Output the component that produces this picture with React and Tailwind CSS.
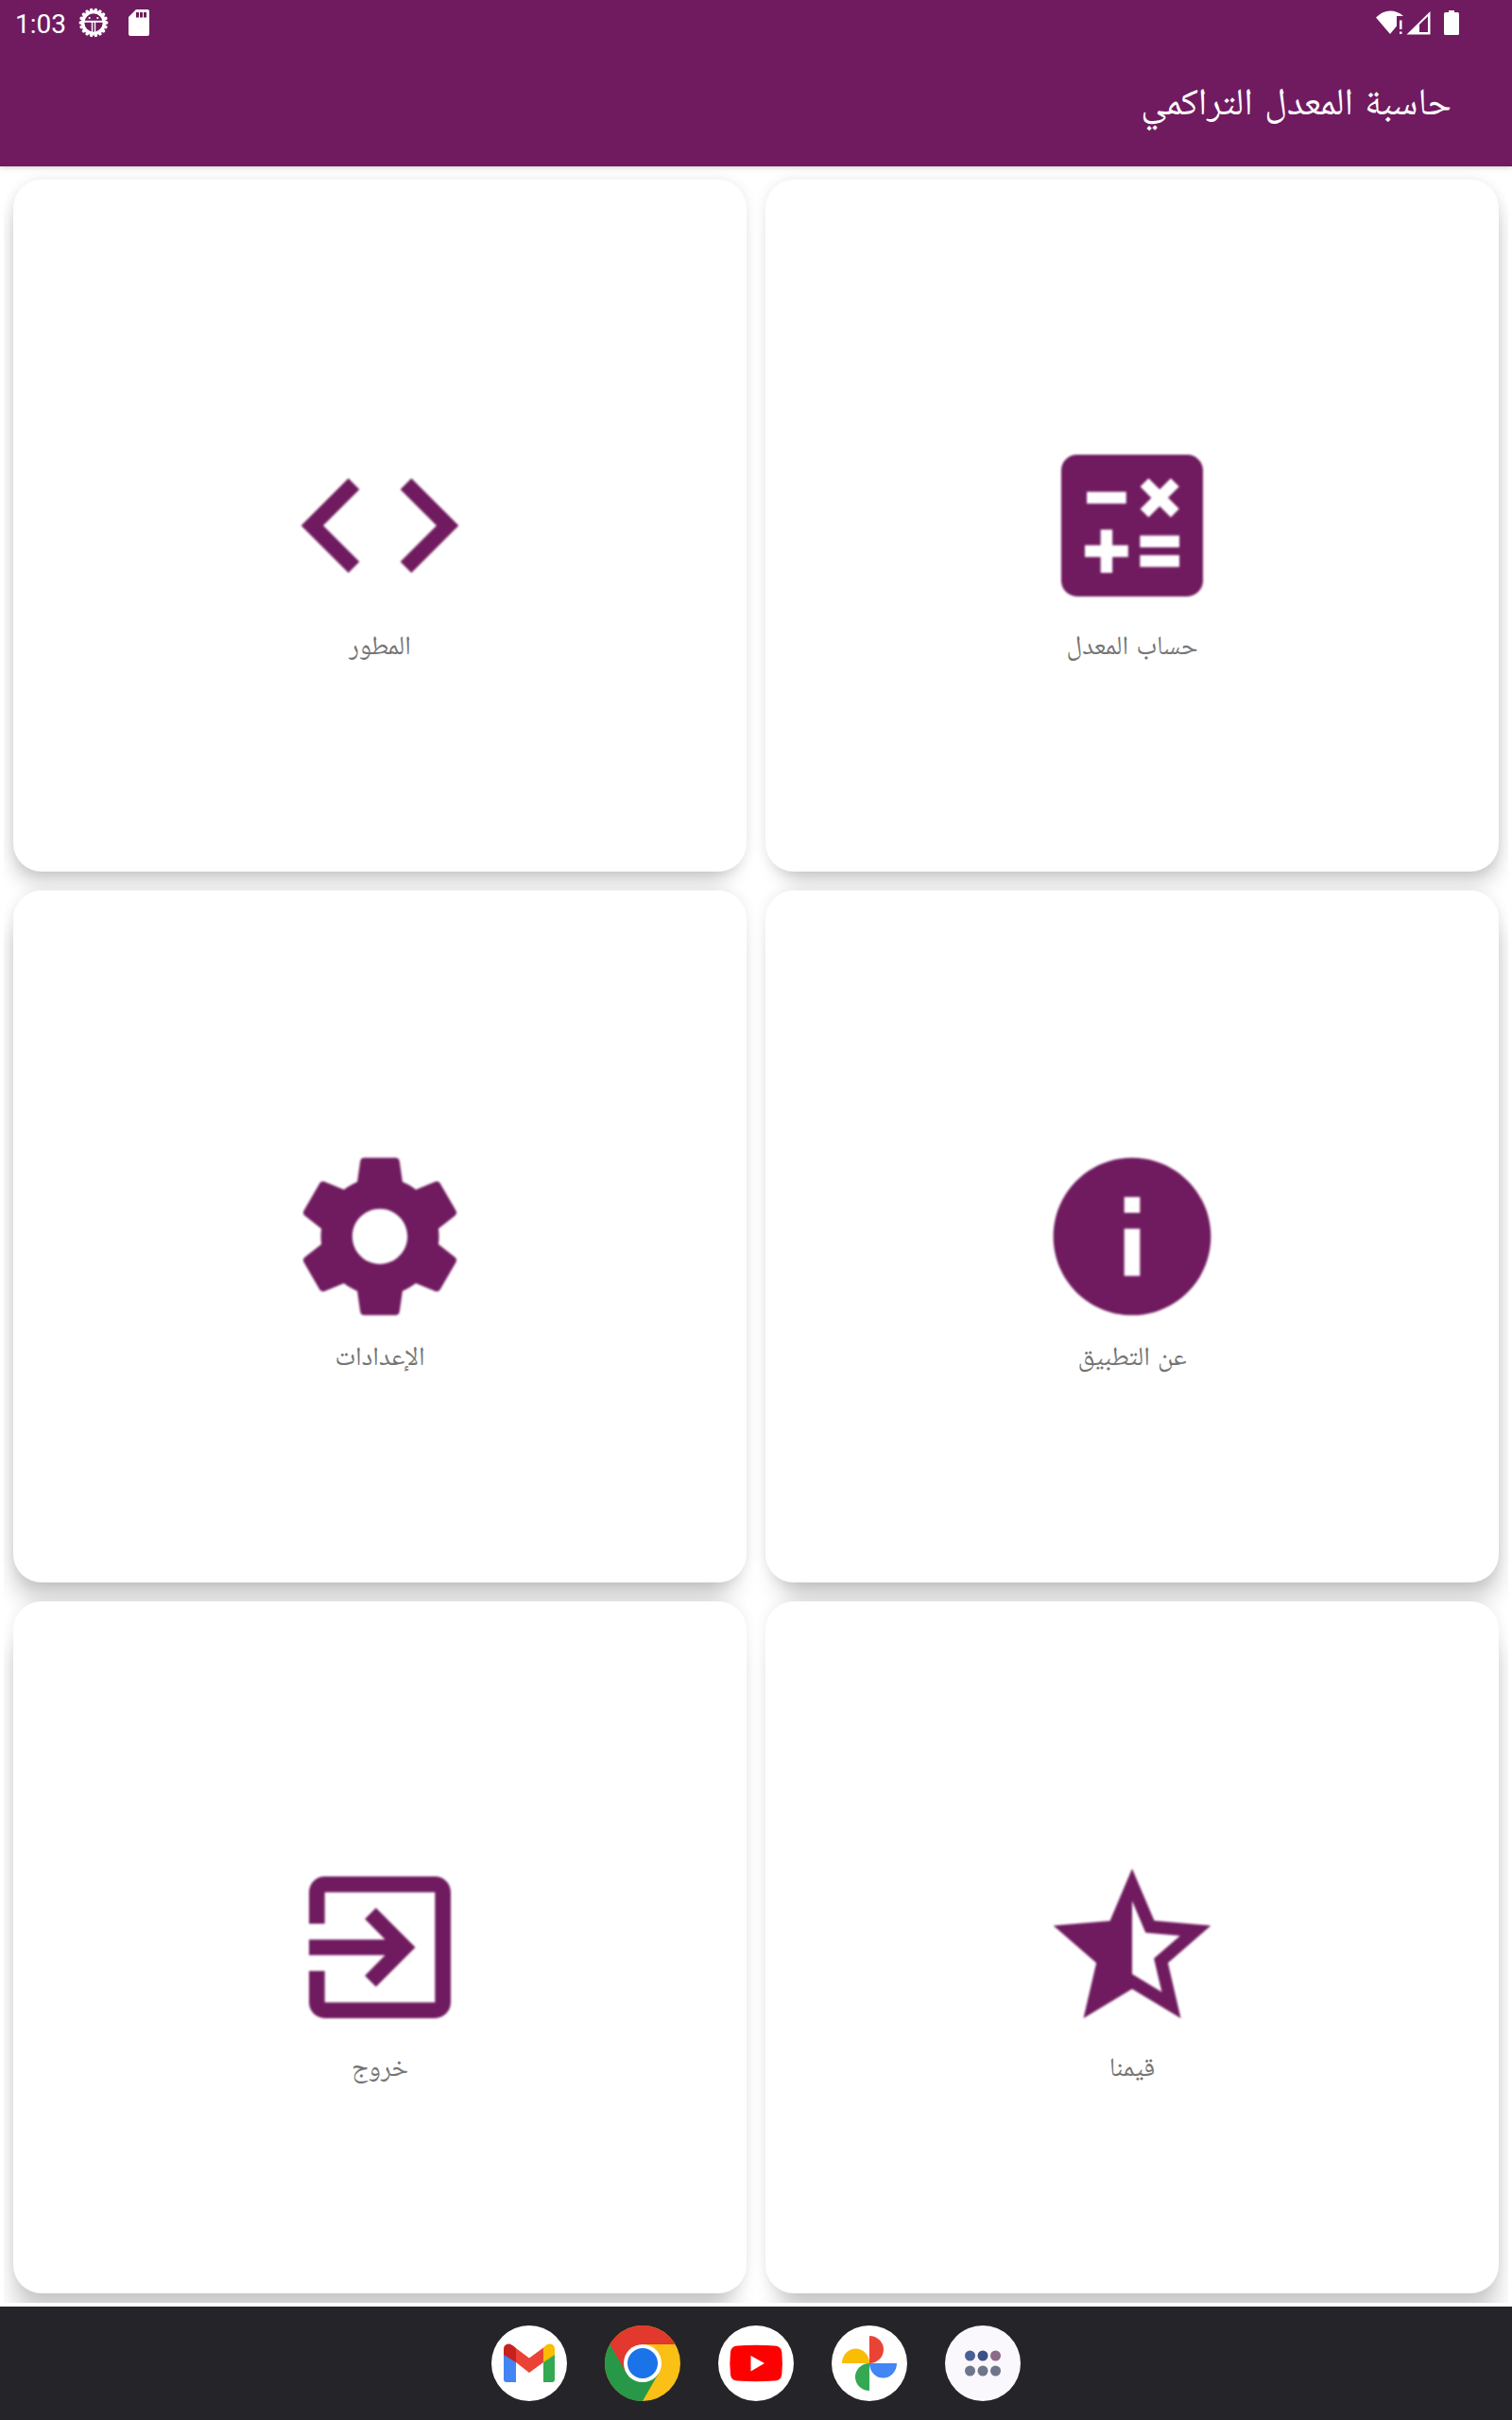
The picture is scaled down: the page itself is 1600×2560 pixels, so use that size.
const icons = {
  calc: 'M19 3H5c-1.1 0-2 .9-2 2v14c0 1.1.9 2 2 2h14c1.1 0 2-.9 2-2V5c0-1.1-.9-2-2-2zm-5.97 4.06L14.09 6l1.41 1.41L16.91 6l1.06 1.06-1.41 1.41 1.41 1.41-1.06 1.06-1.41-1.4-1.41 1.41-1.06-1.06 1.41-1.41-1.41-1.42zM6.25 7.72h5v1.5h-5v-1.5zM11.5 16h-2v2H8v-2H6v-1.5h2v-2h1.5v2h2V16zm6.5 1.25h-5v-1.5h5v1.5zm0-2.5h-5v-1.5h5v1.5z',
  code: 'M9.4 16.6L4.8 12l4.6-4.6L8 6l-6 6 6 6 1.4-1.4zm5.2 0l4.6-4.6-4.6-4.6L16 6l6 6-6 6-1.4-1.4z',
  info: 'M12 2C6.48 2 2 6.48 2 12s4.48 10 10 10 10-4.48 10-10S17.52 2 12 2zm1 15h-2v-6h2v6zm0-8h-2V7h2v2z',
  settings: 'M19.43 12.98c.04-.32.07-.64.07-.98s-.03-.66-.07-.98l2.11-1.65c.19-.15.24-.42.12-.64l-2-3.46c-.12-.22-.39-.3-.61-.22l-2.49 1c-.52-.4-1.08-.73-1.69-.98l-.38-2.65C14.46 2.18 14.25 2 14 2h-4c-.25 0-.46.18-.49.42l-.38 2.65c-.61.25-1.17.59-1.69.98l-2.49-1c-.23-.09-.49 0-.61.22l-2 3.46c-.13.22-.07.49.12.64l2.11 1.65c-.04.32-.07.65-.07.98s.03.66.07.98l-2.11 1.65c-.19.15-.24.42-.12.64l2 3.46c.12.22.39.3.61.22l2.49-1c.52.4 1.08.73 1.69.98l.38 2.65c.03.24.24.42.49.42h4c.25 0 .46-.18.49-.42l.38-2.65c.61-.25 1.17-.59 1.69-.98l2.49 1c.23.09.49 0 .61-.22l2-3.46c.12-.22.07-.49-.12-.64l-2.11-1.65zM12 15.5c-1.93 0-3.5-1.57-3.5-3.5s1.57-3.5 3.5-3.5 3.5 1.57 3.5 3.5-1.57 3.5-3.5 3.5z',
  star: 'M22 9.24l-7.19-.62L12 2 9.19 8.63 2 9.24l5.46 4.73L5.82 21 12 17.27 18.18 21l-1.63-7.03L22 9.24zM12 15.4V6.1l1.71 4.04 4.38.38-3.32 2.88 1 4.28L12 15.4z',
  exit: 'M10.09 15.59L11.5 17l5-5-5-5-1.41 1.41L12.67 11H3v2h9.67l-2.58 2.59zM19 3H5c-1.11 0-2 .9-2 2v4h2V5h14v14H5v-4H3v4c0 1.1.89 2 2 2h14c1.1 0 2-.9 2-2V5c0-1.1-.9-2-2-2z',
};

const cards = [
  { label: 'حساب المعدل', icon: 'calc', shadow: 'shadow-[6px_18px_22px_-8px_rgba(0,0,0,0.2),0_0_14px_rgba(0,0,0,0.09)]' },
  { label: 'المطور', icon: 'code', shadow: 'shadow-[-6px_18px_22px_-8px_rgba(0,0,0,0.2),0_0_14px_rgba(0,0,0,0.09)]' },
  { label: 'عن التطبيق', icon: 'info', shadow: 'shadow-[6px_24px_24px_-8px_rgba(0,0,0,0.21),0_0_14px_rgba(0,0,0,0.09)]' },
  { label: 'الإعدادات', icon: 'settings', shadow: 'shadow-[-6px_24px_24px_-8px_rgba(0,0,0,0.21),0_0_14px_rgba(0,0,0,0.09)]' },
  { label: 'قيمنا', icon: 'star', shadow: 'shadow-[6px_32px_24px_-8px_rgba(0,0,0,0.19),0_0_14px_rgba(0,0,0,0.08)]' },
  { label: 'خروج', icon: 'exit', shadow: 'shadow-[-6px_32px_24px_-8px_rgba(0,0,0,0.19),0_0_14px_rgba(0,0,0,0.08)]' },
];

function Card({ label, icon, shadow }) {
  return (
    <div className={'flex h-[732px] flex-col items-center rounded-[30px] bg-white pt-[266px] ' + shadow}>
      <svg viewBox="0 0 24 24" className="size-[200px] shrink-0 fill-[#701b5f] blur-[1px]">
        <path d={icons[icon]} />
      </svg>
      <span className="mt-[11px] text-[28px] leading-[38px] [word-spacing:2px] whitespace-nowrap text-[#757575]">{label}</span>
    </div>
  );
}

function StatusBar() {
  const teeth = Array.from({ length: 18 }, (_, i) => i * 20);
  return (
    <div dir="ltr" className="flex h-12 items-center justify-between pr-[56px] pl-4">
      <div className="flex items-center">
        <span className="w-[54px] pt-1 font-[Roboto] text-[28px] leading-8">1:03</span>
        <svg viewBox="-16 -16 32 32" className="ml-[13px] size-8">
          <circle r="11" fill="none" stroke="white" strokeWidth="2.7" />
          {teeth.map((a) => (
            <path key={a} d="M-2.6-11.5L-1.2-15.3H1.2L2.6-11.5z" fill="white" transform={'rotate(' + (a + 10) + ')'} />
          ))}
          <path d="M-11-1.2H11" stroke="white" strokeWidth="2" />
          <path d="M-1.5-1V11M1.5-1V11" stroke="white" strokeWidth="1.4" />
          <circle cx="-4.3" cy="-5" r="1.1" fill="white" />
          <circle cx="4.3" cy="-5" r="1.1" fill="white" />
        </svg>
        <svg viewBox="0 0 22 28" className="ml-[21px] h-7 w-[22px]">
          <path fillRule="evenodd" fill="white" d="M8 0H20Q22 0 22 2V26Q22 28 20 28H2Q0 28 0 26V8zM8 3V8.600H11V3zM12 3V8.600H15V3zM16 3V8.600H19V3z" />
        </svg>
      </div>
      <svg viewBox="0 0 88 26" className="h-[26px] w-[88px]" fill="white">
        <path d="M0 7.500Q7 .5 15 .5T29 6H22V16.500L15 25z" />
        <path d="M25 10.500h2.500v9.500h-2.500zM25 22.500h2.500v2.500h-2.500z" />
        <path fillRule="evenodd" d="M32.500 25.500L57.500 1V25.500zM46 15V23H55V6.300z" />
        <path d="M77 0h6v2h3.500Q88 2 88 4V24.500Q88 26 86.500 26H73.500Q72 26 72 24.500V4Q72 2 73.500 2H77z" />
      </svg>
    </div>
  );
}

function Gmail() {
  return (
    <svg viewBox="0 0 80 80" className="size-20">
      <circle cx="40" cy="40" r="40" fill="white" />
      <path d="M13 29v28q0 3 3 3h10V35z" fill="#4285f4" />
      <path d="M67 29v28q0 3-3 3H55V35z" fill="#34a853" />
      <path d="M26 24L40 34.500 55 23.500V39L40 50 26 39z" fill="#ea4335" />
      <path d="M13 31v-6q0-5 5-5.500 3-.3 8 4.500v15z" fill="#c5221f" />
      <path d="M67 31v-6q0-5-5-5.500-3-.3-7 4v15.500z" fill="#fbbc04" />
    </svg>
  );
}

function Chrome() {
  return (
    <svg viewBox="0 0 80 80" className="size-20">
      <circle cx="40" cy="40" r="40" fill="#fbc016" />
      <path d="M5.400 20A40 40 0 0 0 40 80L57.300 50 40 40z" fill="#279847" />
      <path d="M5.400 20A40 40 0 0 1 74.600 20H40L22.700 50z" fill="#e2382d" />
      <circle cx="40" cy="40" r="20" fill="white" />
      <circle cx="40" cy="40" r="16" fill="#1a73e8" />
    </svg>
  );
}

function Youtube() {
  return (
    <svg viewBox="0 0 80 80" className="size-20">
      <circle cx="40" cy="40" r="40" fill="white" />
      <path d="M20 21.500Q40 20 60 21.500 66.500 22 67.300 28 68.600 40 67.300 52 66.500 58 60 58.500 40 60 20 58.500 13.800 58 13 52 11.600 40 13 28 13.800 22 20 21.500z" fill="#f00" />
      <path d="M34.500 32V48.500L49 40z" fill="white" />
    </svg>
  );
}

function Photos() {
  return (
    <svg viewBox="0 0 80 80" className="size-20">
      <circle cx="40" cy="40" r="40" fill="white" />
      <path d="M40 40V11a15 14.500 0 0 1 0 29z" fill="#ea4335" />
      <path d="M40 40H69a14.500 15.500 0 0 1-29 0z" fill="#4285f4" />
      <path d="M40 40V69a15 14.500 0 0 1 0-29z" fill="#34a853" />
      <path d="M40 40H11a14.500 15.500 0 0 1 29 0z" fill="#fbbc04" />
    </svg>
  );
}

function AllApps() {
  const dots = [
    [26.5, 32, '#4a5f94'], [40, 32, '#3e5187'], [53.5, 32, '#8c6a8a'],
    [26.5, 48, '#6f758a'], [40, 48, '#6f758a'], [53.5, 48, '#6f758a'],
  ];
  return (
    <svg viewBox="0 0 80 80" className="size-20">
      <circle cx="40" cy="40" r="40" fill="#faf8fd" />
      {dots.map(([x, y, c]) => (
        <circle key={x + '-' + y} cx={x} cy={y} r="5.5" fill={c} />
      ))}
    </svg>
  );
}

export default function App() {
  return (
    <div dir="rtl" className="flex h-[2560px] w-[1600px] flex-col overflow-hidden bg-white font-['Noto_Naskh_Arabic','Noto_Sans_Arabic','DejaVu_Sans',sans-serif]">
      <header className="relative z-10 h-44 shrink-0 bg-[#701b5f] text-white shadow-[0_1px_6px_rgba(0,0,0,0.2)]">
        <StatusBar />
        <h1 className="flex h-32 items-center pr-16 text-[40px] font-normal [word-spacing:3.5px] whitespace-nowrap">حاسبة المعدل التراكمي</h1>
      </header>
      <main className="mx-1 grid h-[2260px] shrink-0 grid-cols-2 content-start gap-5 overflow-hidden px-2.5 pt-3.5">
        {cards.map((c) => (
          <Card key={c.icon} {...c} />
        ))}
      </main>
      <nav dir="ltr" className="mt-1 flex h-[120px] shrink-0 items-center justify-center gap-10 bg-[#252429]">
        <Gmail />
        <Chrome />
        <Youtube />
        <Photos />
        <AllApps />
      </nav>
    </div>
  );
}
